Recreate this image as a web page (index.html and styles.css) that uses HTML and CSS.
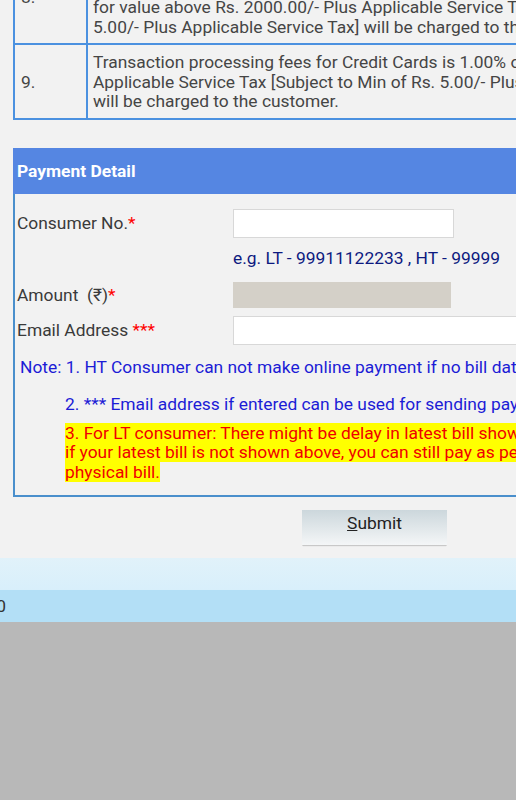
FILE: index.html
```html
<!DOCTYPE html>
<html>
<head>
<meta charset="utf-8">
<link rel="stylesheet" href="styles.css">
</head>
<body>
<div class="page">
  <table class="fees">
    <tr>
      <td class="num">8.</td>
      <td class="desc">Transaction processing fees for Debit Cards is 0.75% of transaction value upto<br>Rs. 2000.00/- and 1.00% of transaction value Plus Applicable Service Tax<br>for value above Rs. 2000.00/- Plus Applicable Service Tax [Subject to Min of Rs.<br>5.00/- Plus Applicable Service Tax] will be charged to the customer.</td>
    </tr>
    <tr>
      <td class="num">9.</td>
      <td class="desc">Transaction processing fees for Credit Cards is 1.00% of transaction value Plus<br>Applicable Service Tax [Subject to Min of Rs. 5.00/- Plus Applicable Service Tax]<br>will be charged to the customer.</td>
    </tr>
  </table>

  <div class="panel">
    <div class="panel-head">Payment Detail</div>
    <div class="form">
      <div class="label">Consumer No.<span class="req">*</span></div>
      <div class="field"><div class="input w220"></div></div>

      <div class="label"></div>
      <div class="hint">e.g. LT - 99911122233 , HT - 99999</div>

      <div class="label amount-label">Amount&nbsp; (₹)<span class="req">*</span></div>
      <div class="field amount-field"><div class="readonly"></div></div>

      <div class="label email-label">Email Address <span class="req">***</span></div>
      <div class="field email-field"><div class="input w300"></div></div>
    </div>
    <div class="notes">
      <div class="note1">Note: 1. HT Consumer can not make online payment if no bill data is available.</div>
      <div class="note2">2. *** Email address if entered can be used for sending payment confirmation.</div>
      <div class="note3"><span class="hl">3. For LT consumer: There might be delay in latest bill showing due to technical reasons,<br>if your latest bill is not shown above, you can still pay as per your latest<br>physical bill.</span></div>
    </div>
  </div>

  <div class="actions">
    <div class="btn"><span class="u">S</span>ubmit</div>
  </div>
</div>
<div class="band-light"></div>
<div class="band-dark"><div class="foot-text">Copyright © 2020</div></div>
<div class="gray"></div>
</body>
</html>
```

FILE: styles.css
```css
html, body {
  margin: 0;
  padding: 0;
  overflow: hidden;
  background: #b8b8b8;
  font-family: Roboto, "Noto Sans", sans-serif;
  font-size: 17.4px;
  width: 516px;
}

.page {
  background: #f2f2f2;
  width: 516px;
  overflow: hidden;
  padding: 0 0 13px 13px;
  box-sizing: border-box;
}

.fees {
  border-collapse: collapse;
  margin-top: -51px;
  width: 760px;
  color: #454545;
}

.fees td {
  border: 2px solid #4b91e0;
  padding: 8px 5px 6px;
  white-space: nowrap;
  vertical-align: middle;
  line-height: 19.5px;
}

.fees td.num {
  width: 60px;
  padding-left: 6px;
  padding-right: 5px;
}

.panel {
  margin-top: 28px;
  width: 760px;
  border: 2px solid #4a8fcc;
  border-top: 0;
  padding-bottom: 13px;
}

.panel-head {
  background: #5586e2;
  color: #fff;
  font-weight: bold;
  height: 46px;
  line-height: 46px;
  margin-left: -2px;
  margin-right: -2px;
  padding-left: 4px;
}

.form {
  display: grid;
  grid-template-columns: 216px 1fr;
  padding-left: 2px;
  padding-top: 15px;
  color: #3a3a3a;
  align-items: center;
}

.req { color: #ff0000; }

.input {
  height: 29px;
  background: #fff;
  border: 1px solid #d8d8d8;
  box-sizing: border-box;
}
.w220 { width: 221px; }
.w300 { width: 320px; }

.hint {
  color: #0d1a80;
  margin-top: 10px;
  line-height: 20px;
}

.amount-label, .amount-field { margin-top: 14px; }
.readonly {
  width: 218px;
  height: 26px;
  background: #d4d0c8;
}

.email-label, .email-field { margin-top: 8px; }

.notes {
  white-space: nowrap;
  color: #1c1cd6;
  line-height: 20px;
}
.note1 { margin-top: 12px; padding-left: 5px; }
.note2 { margin-top: 17px; padding-left: 50px; }
.note3 { margin-top: 10px; padding-left: 50px; line-height: 19.5px; }
.hl { background: #ffff00; color: #f00000; }

.actions {
  display: flex;
  padding-left: 289px;
  padding-top: 13px;
}

.btn {
  width: 145px;
  height: 35px;
  line-height: 27px;
  text-align: center;
  color: #222;
  background: linear-gradient(#ccd7dc, #f4f6f7);
  box-shadow: 0 2px 1px -1px #c8c8c8, 0 1px 0 #dcdcdc;
}
.u { text-decoration: underline; }

.band-light {
  height: 32px;
  background: linear-gradient(#e1f2fa, #d8effb);
}
.band-dark {
  height: 32px;
  background: #b3dff6;
  display: flex;
  align-items: center;
}
.foot-text {
  width: 6px;
  display: flex;
  justify-content: flex-end;
  white-space: nowrap;
  color: #333;
}
.gray {
  height: 200px;
  background: #b8b8b8;
}
```
